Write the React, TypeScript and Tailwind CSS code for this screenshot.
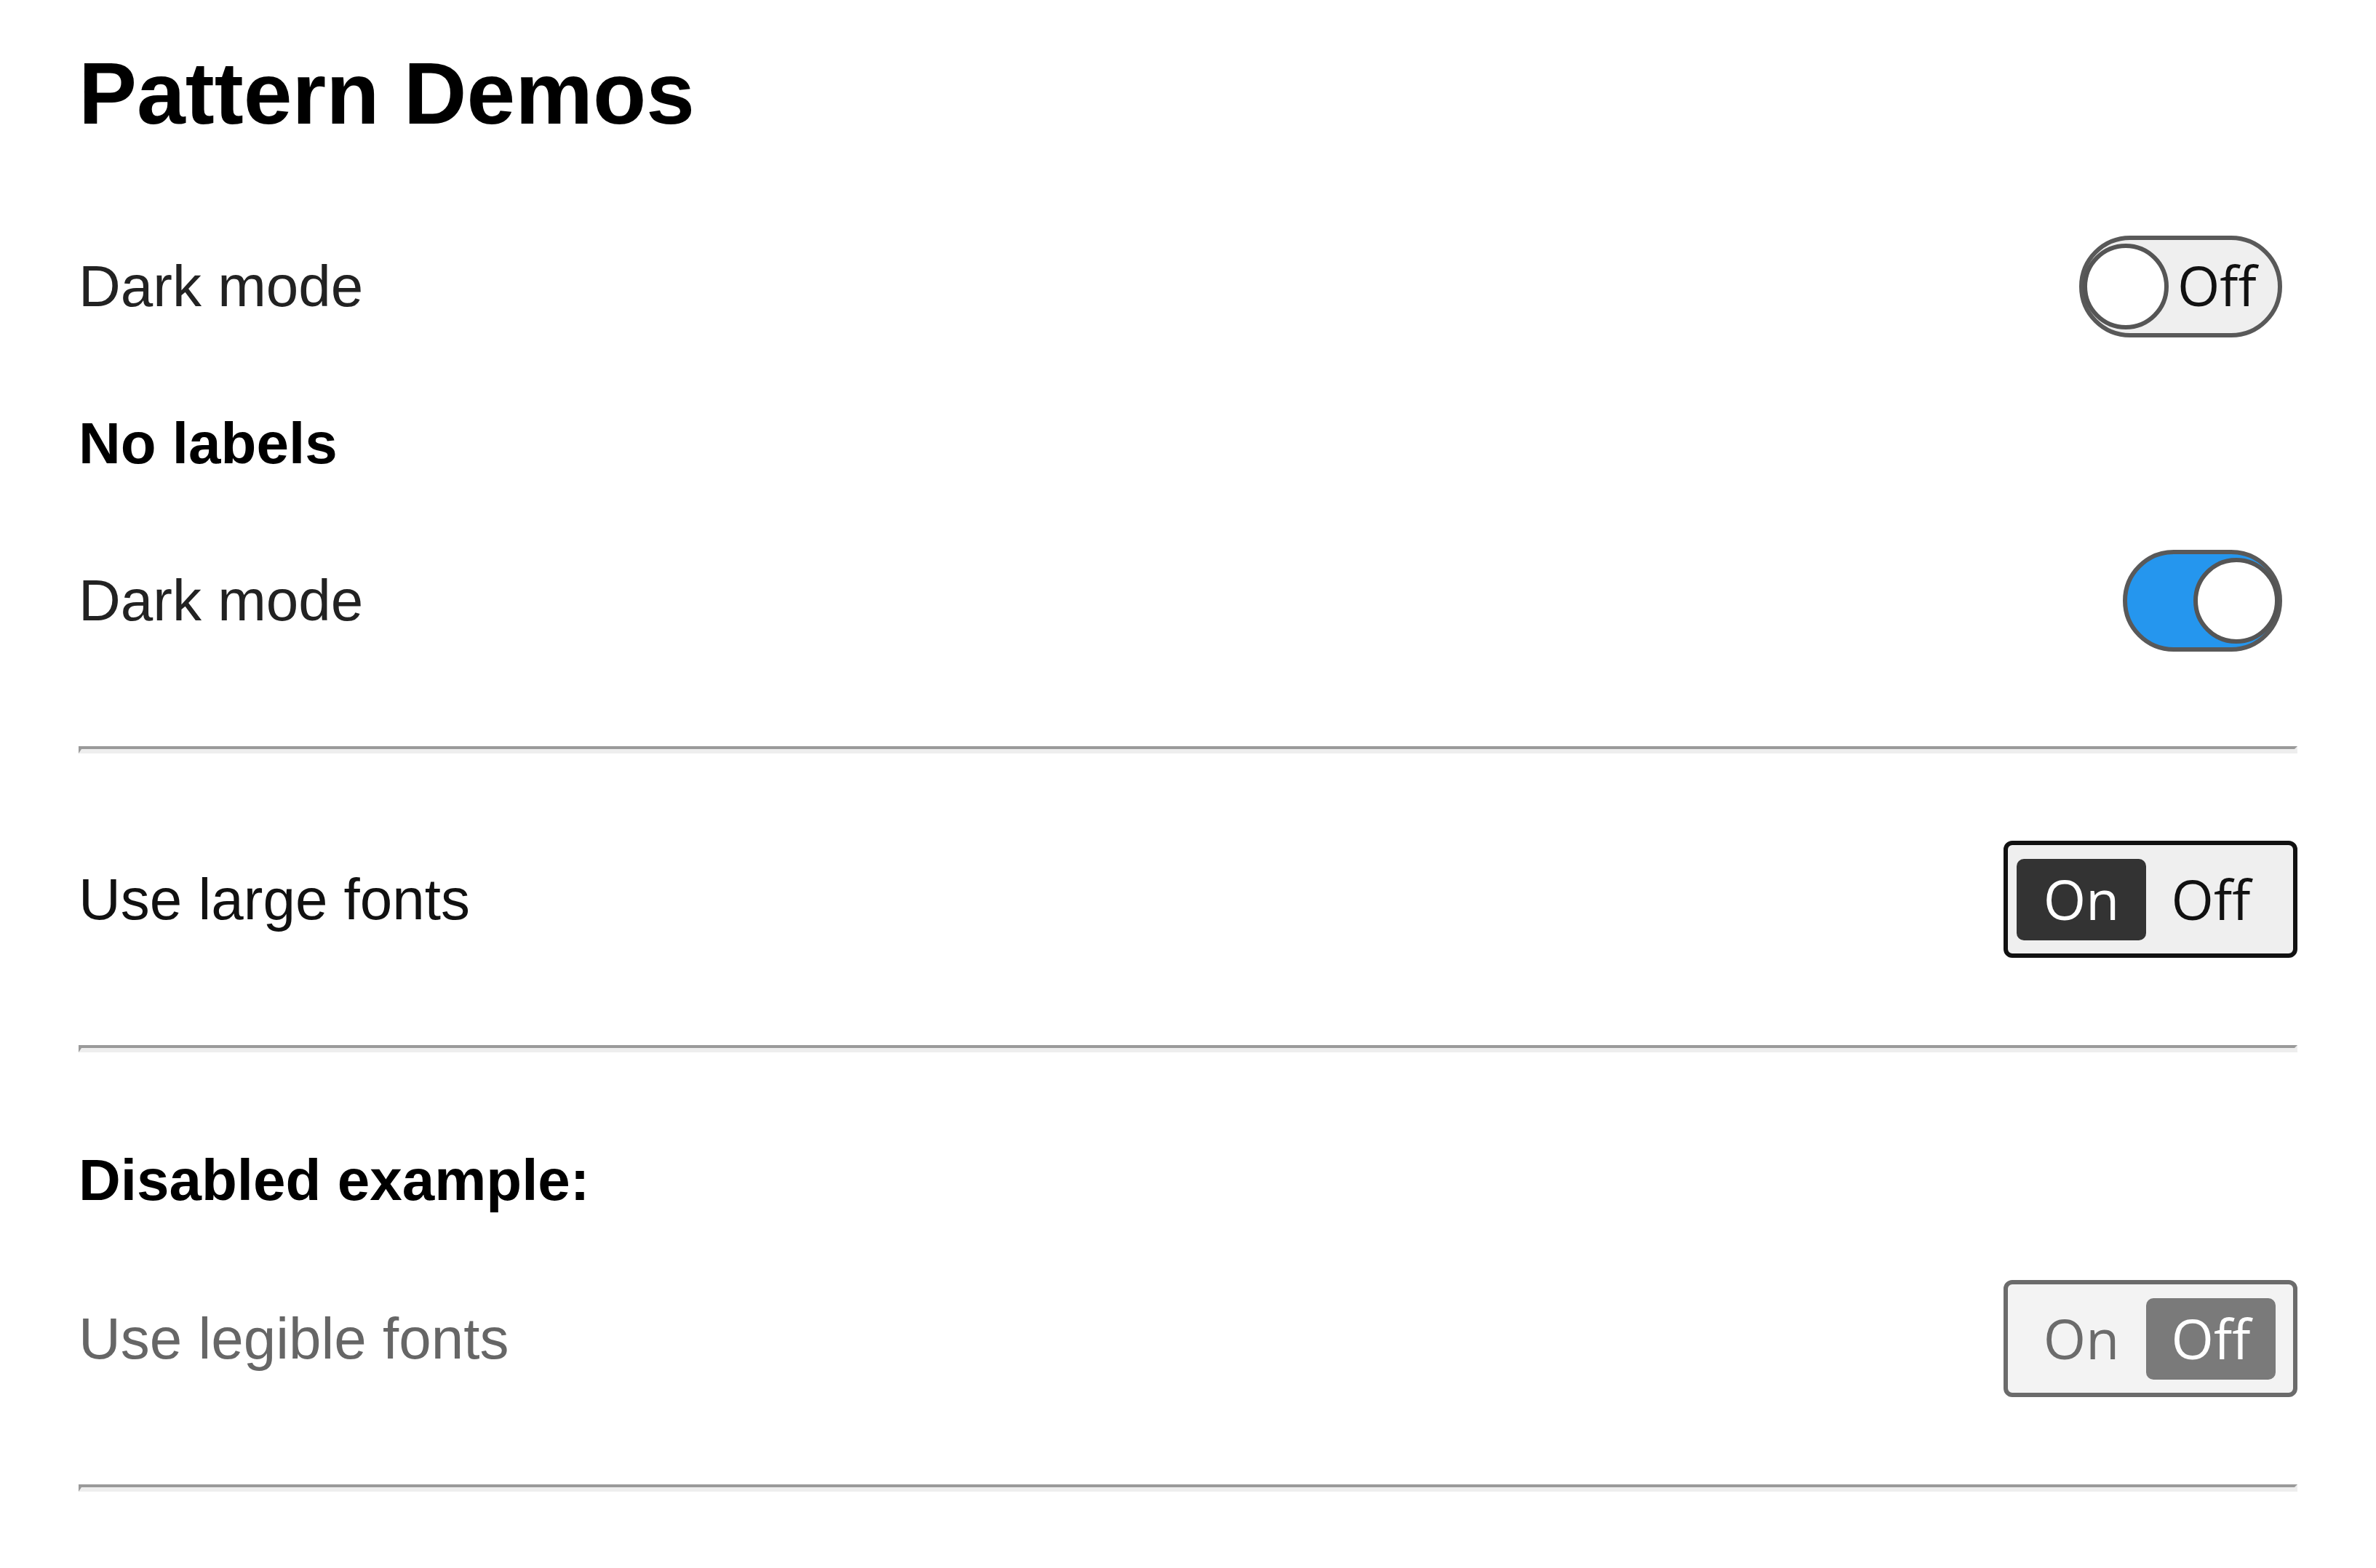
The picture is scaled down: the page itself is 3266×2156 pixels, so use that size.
import { useState } from "react";

const sans = "font-['Liberation_Sans',Arial,sans-serif]";
const ui = "font-['Open_Sans','Noto_Sans',sans-serif]";

function Divider() {
  return (
    <div className="h-[10px] border-t-[4px] border-l-[4px] border-b-[6px] border-r-[4px] border-t-[#9a9a9a] border-l-[#9a9a9a] border-b-[#eeeeee] border-r-[#eeeeee]" />
  );
}

function Knob() {
  return <span className="block h-[118px] w-[118px] shrink-0 rounded-full border-[6px] border-[#555] bg-white" />;
}

function LabeledSwitch({ on, onToggle }: { on: boolean; onToggle: () => void }) {
  return (
    <button
      onClick={onToggle}
      className={`mr-[21px] flex h-[140px] w-[279px] items-center rounded-full border-[6px] border-[#595959] bg-[#efefef] ${ui}`}
    >
      <span className="ml-[-1px]">
        <Knob />
      </span>
      <span className="ml-[12px] mt-[-4px] text-[75px] leading-none text-[#111]">{on ? "On" : "Off"}</span>
    </button>
  );
}

function PlainSwitch({ on, onToggle }: { on: boolean; onToggle: () => void }) {
  return (
    <button
      onClick={onToggle}
      className={`mr-[21px] flex h-[140px] w-[219px] items-center rounded-full border-[6px] border-[#595959] ${
        on ? "justify-end bg-[#2596ee]" : "justify-start bg-[#efefef]"
      }`}
    >
      <span className={on ? "mr-[-2px]" : "ml-[-1px]"}>
        <Knob />
      </span>
    </button>
  );
}

function Segmented({
  value,
  onChange,
  disabled,
}: {
  value: boolean;
  onChange?: (v: boolean) => void;
  disabled?: boolean;
}) {
  const frame = disabled ? "border-[#6b6b6b] bg-[#f3f3f3]" : "border-[#111] bg-[#efefef]";
  const activeChip = disabled ? "bg-[#7a7a7a] text-white" : "bg-[#333] text-white";
  const idleChip = disabled ? "text-[#6b6b6b]" : "text-[#111]";
  return (
    <div className={`flex h-[161px] w-[404px] items-center rounded-[12px] border-[6px] px-[12px] ${frame} ${ui}`}>
      {[true, false].map((v) => (
        <button
          key={String(v)}
          disabled={disabled}
          onClick={() => onChange?.(v)}
          className={`flex h-[112px] w-[178px] items-center justify-center rounded-[10px] text-[75px] leading-none ${
            value === v ? activeChip : idleChip
          }`}
        >
          {v ? "On" : "Off"}
        </button>
      ))}
    </div>
  );
}

export default function App() {
  const [dark, setDark] = useState(false);
  const [dark2, setDark2] = useState(true);
  const [large, setLarge] = useState(true);

  return (
    <main className={`min-h-screen bg-white px-[108px] ${sans}`}>
      <h1 className="mt-[61px] text-[120px] font-bold leading-[134px] text-black">Pattern Demos</h1>

      <div className="mt-[129px] flex h-[140px] items-center justify-between">
        <span className="text-[80px] text-[#222]">Dark mode</span>
        <LabeledSwitch on={dark} onToggle={() => setDark(!dark)} />
      </div>

      <h2 className="mt-[101px] text-[80px] font-bold leading-[90px] text-black">No labels</h2>

      <div className="mt-[101px] flex h-[140px] items-center justify-between">
        <span className="text-[80px] text-[#222]">Dark mode</span>
        <PlainSwitch on={dark2} onToggle={() => setDark2(!dark2)} />
      </div>

      <div className="mt-[130px]">
        <Divider />
      </div>

      <div className="mt-[120px] flex h-[161px] items-center justify-between">
        <span className="text-[80px] text-[#111]">Use large fonts</span>
        <Segmented value={large} onChange={setLarge} />
      </div>

      <div className="mt-[120px]">
        <Divider />
      </div>

      <h2 className="mt-[131px] text-[80px] font-bold leading-[90px] text-black">Disabled example:</h2>

      <div className="mt-[92px] flex h-[161px] items-center justify-between">
        <span className="text-[80px] text-[#666]">Use legible fonts</span>
        <Segmented value={false} disabled />
      </div>

      <div className="mt-[120px]">
        <Divider />
      </div>
    </main>
  );
}
